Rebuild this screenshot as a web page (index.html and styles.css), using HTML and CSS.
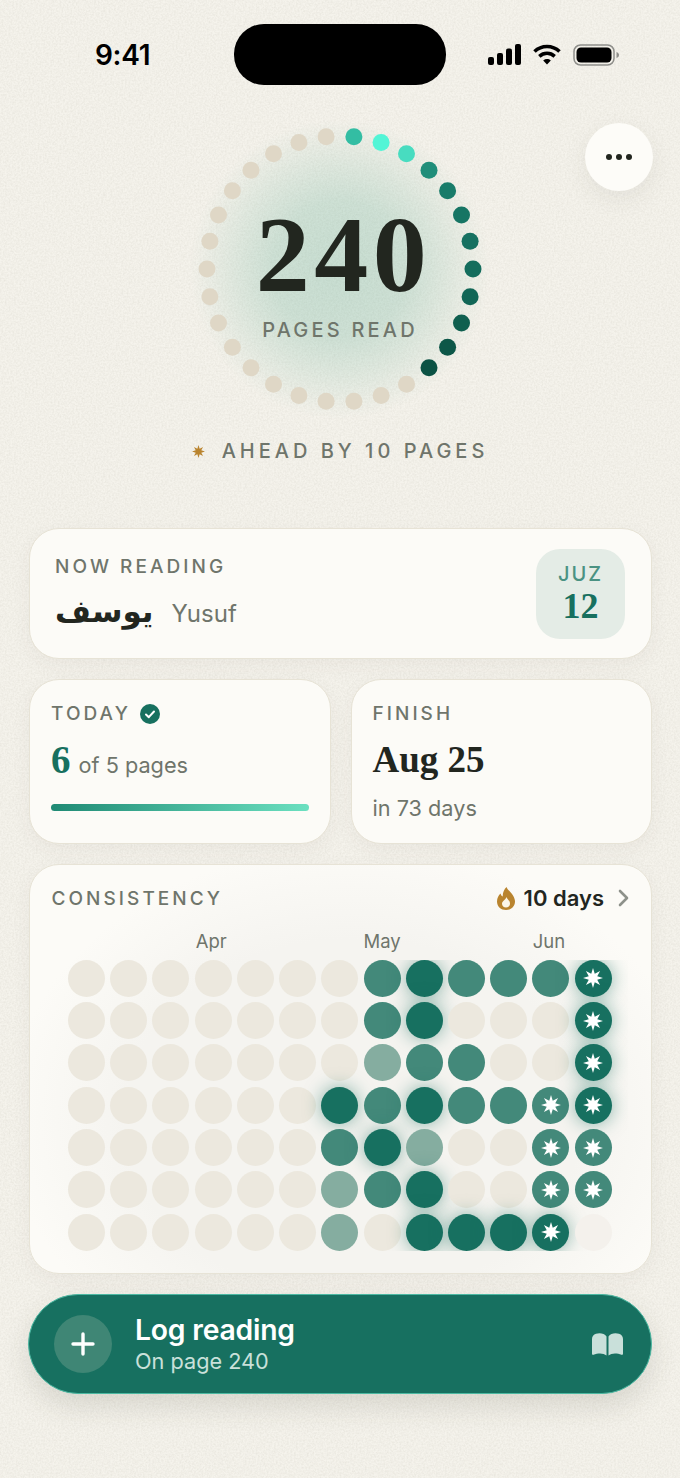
FILE: index.html
```html
<!DOCTYPE html>
<html lang="en">
<head>
    <meta charset="UTF-8">
    <meta name="viewport" content="width=device-width, initial-scale=1.0">
    <title>Reading Progress</title>
    <link rel="stylesheet" href="styles.css">
</head>
<body>
    <!-- Paper grain behind everything -->
    <svg class="grain" width="680" height="1478" aria-hidden="true">
        <filter id="paper">
            <feTurbulence type="fractalNoise" baseFrequency="0.55" numOctaves="3" seed="4"/>
            <feColorMatrix values="0 0 0 0 0.45  0 0 0 0 0.43  0 0 0 0 0.36  0 0 0 0.3 -0.09"/>
        </filter>
        <rect width="680" height="1478" filter="url(#paper)"/>
        <symbol id="burst" viewBox="0 0 20 20">
            <polygon points="10,0 11.76,5.75 17.07,2.93 14.25,8.24 20,10 14.25,11.76 17.07,17.07 11.76,14.25 10,20 8.24,14.25 2.93,17.07 5.75,11.76 0,10 5.75,8.24 2.93,2.93 8.24,5.75"/>
        </symbol>
    </svg>

    <div class="statusBar">
        <div class="time">9:41</div>
        <div class="island"></div>
        <div class="statusIcons">
            <svg width="33" height="21" viewBox="0 0 33 21" fill="#000">
                <rect x="0" y="13" width="6" height="8" rx="2"/>
                <rect x="9" y="9" width="6" height="12" rx="2"/>
                <rect x="18" y="4.500" width="6" height="16.500" rx="2"/>
                <rect x="27" y="0" width="6" height="21" rx="2"/>
            </svg>
            <svg width="28" height="21" viewBox="0 0 28 21" fill="none" stroke="#000" stroke-width="3.600">
                <path d="M1.500 7.500C8.500 .8 19.500 .8 26.500 7.500"/>
                <path d="M6.300 12.300C10.800 8.300 17.200 8.300 21.700 12.300"/>
                <path d="M10.200 16.500L14 20.500L17.800 16.500C15.500 14.600 12.500 14.600 10.200 16.500Z" fill="#000" stroke="none"/>
            </svg>
            <svg width="46" height="22" viewBox="0 0 46 22">
                <rect x="1" y="1" width="40" height="20" rx="6.500" fill="none" stroke="#8e8e8a" stroke-width="1.500"/>
                <rect x="3.500" y="3.500" width="35" height="15" rx="4.500" fill="#000"/>
                <path d="M43.500 8V14C45 13.500 46 12.500 46 11S45 8.500 43.500 8Z" fill="#8e8e8a"/>
            </svg>
        </div>
    </div>

    <button class="moreButton" aria-label="More"><span></span><span></span><span></span></button>

    <section class="hero">
        <div class="ring">
            <svg class="ringDots" width="300" height="300" viewBox="-150 -150 300 300">
                <g fill="#dfd7c6">
                    <circle cx="-13.9" cy="-132.3" r="8.500"/>
                    <circle cx="-41.1" cy="-126.5" r="8.500"/>
                    <circle cx="-66.5" cy="-115.2" r="8.500"/>
                    <circle cx="-89" cy="-98.8" r="8.500"/>
                    <circle cx="-107.6" cy="-78.2" r="8.500"/>
                    <circle cx="-121.5" cy="-54.1" r="8.500"/>
                    <circle cx="-130.1" cy="-27.7" r="8.500"/>
                    <circle cx="-133" cy="0" r="8.500"/>
                    <circle cx="-130.1" cy="27.7" r="8.500"/>
                    <circle cx="-121.5" cy="54.1" r="8.500"/>
                    <circle cx="-107.6" cy="78.2" r="8.500"/>
                    <circle cx="-89" cy="98.8" r="8.500"/>
                    <circle cx="-66.5" cy="115.2" r="8.500"/>
                    <circle cx="-41.1" cy="126.5" r="8.500"/>
                    <circle cx="-13.9" cy="132.3" r="8.500"/>
                    <circle cx="13.9" cy="132.3" r="8.500"/>
                    <circle cx="41.1" cy="126.5" r="8.500"/>
                    <circle cx="66.5" cy="115.2" r="8.500"/>
                </g>
                <circle cx="13.9" cy="-132.3" r="8.500" fill="#33bda3"/>
                <circle cx="41.1" cy="-126.5" r="8.500" fill="#52f5d6"/>
                <circle cx="66.5" cy="-115.2" r="8.500" fill="#48dcc0"/>
                <circle cx="89" cy="-98.8" r="8.500" fill="#208e7a"/>
                <circle cx="107.6" cy="-78.2" r="8.500" fill="#187c6a"/>
                <circle cx="121.5" cy="-54.1" r="8.500" fill="#167564"/>
                <circle cx="130.1" cy="-27.7" r="8.500" fill="#167161"/>
                <circle cx="133" cy="0" r="8.500" fill="#146d5d"/>
                <circle cx="130.1" cy="27.7" r="8.500" fill="#116656"/>
                <circle cx="121.5" cy="54.1" r="8.500" fill="#0f5f4f"/>
                <circle cx="107.6" cy="78.2" r="8.500" fill="#0d5748"/>
                <circle cx="89" cy="98.8" r="8.500" fill="#0b5244"/>
            </svg>
            <div class="ringText">
                <div class="pagesCount">240</div>
                <div class="pagesLabel">PAGES READ</div>
            </div>
        </div>
        <div class="ahead">
            <svg class="aheadStar" width="13" height="13"><use href="#burst"/></svg>
            <span>AHEAD BY 10 PAGES</span>
        </div>
    </section>

    <main class="cards">
        <div class="card nowReading">
            <div class="nowReadingText">
                <div class="label">NOW READING</div>
                <div class="surah">
                    <span class="surahArabic" lang="ar">يوسف</span>
                    <span class="surahName">Yusuf</span>
                </div>
            </div>
            <div class="juz">
                <div class="juzLabel">JUZ</div>
                <div class="juzNumber">12</div>
            </div>
        </div>

        <div class="cardRow">
            <div class="card smallCard">
                <div class="label labelRow">TODAY
                    <svg width="20" height="20" viewBox="0 0 20 20">
                        <circle cx="10" cy="10" r="10" fill="#17705f"/>
                        <path d="M6 10.500L8.800 13.200L14 7.500" fill="none" stroke="#fff" stroke-width="2" stroke-linecap="round" stroke-linejoin="round"/>
                    </svg>
                </div>
                <div class="todayValue"><span class="todayNumber">6</span> of 5 pages</div>
                <div class="progressBar"></div>
            </div>
            <div class="card smallCard">
                <div class="label">FINISH</div>
                <div class="finishDate">Aug 25</div>
                <div class="finishSub">in 73 days</div>
            </div>
        </div>

        <div class="card consistency">
            <div class="consistencyHead">
                <div class="label">CONSISTENCY</div>
                <div class="streak">
                    <svg width="18" height="23" viewBox="0 0 18 23">
                        <path d="M9.500 0C10.500 3 14 5 16 8.500C17.500 11 18 13 18 14.500C18 19.500 14 23 9 23C4 23 0 19.500 0 14.500C0 11 1.500 8.500 3.500 6.500C4 8 4.500 9 5.800 9.500C5.500 6 7 2.500 9.500 0Z" fill="#b9842f"/>
                        <path d="M9.500 10C10 12 13 13.500 13 16.500C13 19 11.200 20.500 9 20.500C6.800 20.500 5 19 5 16.800C5 14 8.500 13 9.500 10Z" fill="#fbf6ea"/>
                    </svg>
                    <span>10 days</span>
                    <svg class="chevron" width="11" height="18" viewBox="0 0 11 18">
                        <path d="M2 2L9 9L2 16" fill="none" stroke="#8d918a" stroke-width="2.600" stroke-linecap="round" stroke-linejoin="round"/>
                    </svg>
                </div>
            </div>

            <div class="months">
                <span class="monthApr">Apr</span>
                <span class="monthMay">May</span>
                <span class="monthJun">Jun</span>
            </div>

            <div class="heatClip">
                <div class="heatGrid">
                    <!-- row 1 -->
                    <i class="dot"></i><i class="dot"></i><i class="dot"></i><i class="dot"></i><i class="dot"></i><i class="dot"></i><i class="dot"></i>
                    <i class="dot mid"></i><i class="dot dark"></i><i class="dot mid"></i><i class="dot mid"></i><i class="dot mid"></i>
                    <i class="dot dark"><svg><use href="#burst"/></svg></i>
                    <!-- row 2 -->
                    <i class="dot"></i><i class="dot"></i><i class="dot"></i><i class="dot"></i><i class="dot"></i><i class="dot"></i><i class="dot"></i>
                    <i class="dot mid"></i><i class="dot dark"></i><i class="dot"></i><i class="dot"></i><i class="dot"></i>
                    <i class="dot dark"><svg><use href="#burst"/></svg></i>
                    <!-- row 3 -->
                    <i class="dot"></i><i class="dot"></i><i class="dot"></i><i class="dot"></i><i class="dot"></i><i class="dot"></i><i class="dot"></i>
                    <i class="dot light"></i><i class="dot mid"></i><i class="dot mid"></i><i class="dot"></i><i class="dot"></i>
                    <i class="dot dark"><svg><use href="#burst"/></svg></i>
                    <!-- row 4 -->
                    <i class="dot"></i><i class="dot"></i><i class="dot"></i><i class="dot"></i><i class="dot"></i><i class="dot"></i>
                    <i class="dot dark"></i><i class="dot mid"></i><i class="dot dark"></i><i class="dot mid"></i><i class="dot mid"></i>
                    <i class="dot mid"><svg><use href="#burst"/></svg></i>
                    <i class="dot dark"><svg><use href="#burst"/></svg></i>
                    <!-- row 5 -->
                    <i class="dot"></i><i class="dot"></i><i class="dot"></i><i class="dot"></i><i class="dot"></i><i class="dot"></i>
                    <i class="dot mid"></i><i class="dot dark"></i><i class="dot light"></i><i class="dot"></i><i class="dot"></i>
                    <i class="dot mid"><svg><use href="#burst"/></svg></i>
                    <i class="dot mid"><svg><use href="#burst"/></svg></i>
                    <!-- row 6 -->
                    <i class="dot"></i><i class="dot"></i><i class="dot"></i><i class="dot"></i><i class="dot"></i><i class="dot"></i>
                    <i class="dot light"></i><i class="dot mid"></i><i class="dot dark"></i><i class="dot"></i><i class="dot"></i>
                    <i class="dot mid"><svg><use href="#burst"/></svg></i>
                    <i class="dot mid"><svg><use href="#burst"/></svg></i>
                    <!-- row 7 -->
                    <i class="dot"></i><i class="dot"></i><i class="dot"></i><i class="dot"></i><i class="dot"></i><i class="dot"></i>
                    <i class="dot light"></i><i class="dot"></i><i class="dot dark"></i><i class="dot dark"></i><i class="dot dark"></i>
                    <i class="dot dark"><svg><use href="#burst"/></svg></i>
                    <i class="dot future"></i>
                </div>
            </div>
        </div>

        <button class="logButton">
            <span class="plusCircle">
                <svg width="24" height="24" viewBox="0 0 24 24">
                    <path d="M12 2V22M2 12H22" stroke="#fff" stroke-width="3.400" stroke-linecap="round"/>
                </svg>
            </span>
            <span class="logText">
                <span class="logTitle">Log reading</span>
                <span class="logSub">On page 240</span>
            </span>
            <svg class="bookIcon" width="31" height="23" viewBox="0 0 31 23" fill="#c9e0da">
                <path d="M14.500 3.500V22.500C11.500 19.800 6 19.800 1.500 21.800C.7 22.100 0 21.600 0 20.800V6C0 3.500 1.500 1.500 4 .8C8 -.4 12.500 .5 14.500 3.500Z"/>
                <path d="M16.500 3.500V22.500C19.500 19.800 25 19.800 29.500 21.800C30.300 22.100 31 21.600 31 20.800V6C31 3.500 29.500 1.500 27 .8C23 -.4 18.500 .5 16.500 3.500Z"/>
            </svg>
        </button>
    </main>
</body>
</html>
```

FILE: styles.css
```css
body {
    background-color: #f5f3ec;
    color: #22261f;
    font-family: Inter, "Noto Sans", sans-serif;
    margin: 0;
    padding: 0;
    width: 680px;
    height: 1478px;
    overflow: hidden;
    position: relative;
}

.grain {
    position: absolute;
    top: 0;
    left: 0;
}

/* Status bar */

.statusBar {
    position: relative;
    display: grid;
    grid-template-columns: 234px 212px 1fr;
    align-items: center;
    padding-top: 24px;
    height: 61px;
}

.time {
    padding-left: 95px;
    font-size: 28px;
    font-weight: 600;
    letter-spacing: -0.3px;
    color: #000;
}

.island {
    height: 61px;
    background-color: #000;
    border-radius: 30px;
}

.statusIcons {
    display: flex;
    align-items: center;
    gap: 12px;
    padding-left: 42px;
}

.moreButton {
    position: absolute;
    top: 123px;
    left: 585px;
    width: 68px;
    height: 68px;
    display: flex;
    align-items: center;
    justify-content: center;
    gap: 4px;
    padding: 0;
    border: none;
    border-radius: 50%;
    background-color: #fdfcf8;
    box-shadow: 0px 8px 24px rgba(70, 65, 50, 0.08);
}

.moreButton span {
    width: 6px;
    height: 6px;
    border-radius: 50%;
    background-color: #22261f;
}

/* Hero ring */

.hero {
    position: relative;
    display: flex;
    flex-direction: column;
    align-items: center;
    height: 443px;
}

.ring {
    display: grid;
    width: 300px;
    height: 300px;
    margin-top: 34px;
    background: radial-gradient(closest-side, rgba(90, 170, 145, 0.29) 0%, rgba(90, 170, 145, 0.25) 45%, rgba(90, 170, 145, 0.13) 72%, rgba(90, 170, 145, 0) 100%);
}

.ringDots,
.ringText {
    grid-area: 1 / 1;
}

.ringText {
    display: flex;
    flex-direction: column;
    align-items: center;
}

.pagesCount {
    margin-top: 82px;
    margin-left: 7px;
    font-family: "Liberation Serif", serif;
    font-size: 108px;
    line-height: 108px;
    font-weight: 700;
    letter-spacing: 4.500px;
    color: #22261f;
}

.pagesLabel {
    margin-top: 9px;
    font-size: 20px;
    font-weight: 500;
    letter-spacing: 3.200px;
    color: #6f756b;
}

.ahead {
    display: flex;
    align-items: center;
    gap: 17px;
    margin-top: 20px;
    font-size: 20px;
    font-weight: 500;
    letter-spacing: 4px;
    color: #6f756b;
}

.aheadStar {
    fill: #b9842f;
}

/* Cards */

.cards {
    position: relative;
    display: flex;
    flex-direction: column;
    gap: 20px;
    padding: 0 28px 0 29px;
}

.card {
    box-sizing: border-box;
    background-color: #fcfbf7;
    border: 1.500px solid #e7e3d6;
    border-radius: 30px;
    box-shadow: 0px 6px 20px rgba(70, 65, 50, 0.05);
}

.label {
    font-size: 19px;
    font-weight: 500;
    letter-spacing: 3.050px;
    color: #6f756b;
}

.labelRow {
    display: flex;
    align-items: center;
    gap: 9px;
}

.nowReading {
    display: flex;
    justify-content: space-between;
    align-items: center;
    height: 131px;
    padding: 0 25px 0 25px;
}

.nowReadingText {
    margin-bottom: 4px;
}

.surah {
    display: flex;
    align-items: center;
    gap: 18px;
    margin-top: 16px;
}

.surahArabic {
    font-family: "DejaVu Sans", sans-serif;
    font-size: 31px;
    line-height: 34px;
    font-weight: 700;
    color: #22261f;
}

.surahName {
    margin-top: 4px;
    font-size: 24px;
    color: #6f756b;
}

.juz {
    display: flex;
    flex-direction: column;
    align-items: center;
    justify-content: center;
    width: 89px;
    height: 90px;
    margin-right: 1px;
    background-color: #e4ece6;
    border-radius: 24px;
}

.juzLabel {
    font-size: 20px;
    font-weight: 500;
    letter-spacing: 2px;
    color: #4a9282;
}

.juzNumber {
    font-family: "Liberation Serif", serif;
    font-size: 36px;
    line-height: 40px;
    font-weight: 700;
    color: #17705f;
}

.cardRow {
    display: grid;
    grid-template-columns: 1fr 1fr;
    gap: 20px;
}

.smallCard {
    height: 165px;
    padding: 22px 21px 0 21px;
}

.todayValue {
    display: flex;
    align-items: baseline;
    gap: 8px;
    margin-top: 13px;
    font-size: 21.700px;
    color: #6f756b;
}

.todayNumber {
    font-family: "Liberation Serif", serif;
    font-size: 39px;
    line-height: 44px;
    font-weight: 700;
    color: #17705f;
}

.progressBar {
    height: 7px;
    margin-top: 22px;
    border-radius: 4px;
    background: linear-gradient(to right, #1f8a74 0%, #6be0c0 100%);
}

.finishDate {
    margin-top: 13px;
    font-family: "Liberation Serif", serif;
    font-size: 37px;
    line-height: 44px;
    font-weight: 700;
    color: #22261f;
}

.finishSub {
    margin-top: 13px;
    font-size: 21.700px;
    color: #6f756b;
}

.consistency {
    height: 410px;
    padding: 20px 22px 0 21.500px;
    background: radial-gradient(ellipse at 52% 62%, #f5f4f0 0%, #f5f4f0 50%, #fcfbf7 76%);
}

.consistencyHead {
    display: flex;
    justify-content: space-between;
    align-items: center;
}

.streak {
    display: flex;
    align-items: center;
    gap: 9px;
    font-size: 22px;
    font-weight: 600;
    color: #22261f;
}

.chevron {
    margin-left: 5px;
}

.months,
.heatGrid {
    display: grid;
    grid-template-columns: repeat(13, 37px);
    column-gap: 5.220px;
}

.months {
    height: 24px;
    margin-top: 18px;
    padding-left: 16.500px;
    font-size: 18.500px;
    line-height: 24px;
    color: #6f756b;
}

.months span {
    justify-self: center;
    white-space: nowrap;
}

.monthApr {
    grid-column: 4;
    margin-right: 4px;
}

.monthMay {
    grid-column: 8;
}

.monthJun {
    grid-column: 12;
    margin-right: 4px;
}

.heatClip {
    width: 560px;
    margin-top: 6.700px;
    padding-left: 16.500px;
    overflow: hidden;
}

.heatGrid {
    row-gap: 5.350px;
}

.dot {
    display: flex;
    align-items: center;
    justify-content: center;
    width: 37px;
    height: 37px;
    border-radius: 50%;
    background-color: #ece8de;
}

.dot svg {
    width: 20px;
    height: 20px;
    fill: #fff;
}

.dot.light {
    background-color: #85ada0;
}

.dot.mid {
    background-color: #43897a;
}

.dot.dark {
    background-color: #177060;
    box-shadow: 0 0 18px rgba(23, 112, 96, 0.5);
}

.dot.future {
    background-color: #f4f1ec;
}

/* Log reading button */

.logButton {
    box-sizing: border-box;
    display: flex;
    align-items: center;
    width: 624px;
    height: 100px;
    margin-left: -1px;
    padding: 0 28px 0 25px;
    background-color: #177060;
    border: 1.500px solid #4cb8a2;
    border-radius: 50px;
    box-shadow: 0px 12px 28px rgba(60, 60, 45, 0.14);
    font-family: inherit;
    text-align: left;
}

.plusCircle {
    display: flex;
    align-items: center;
    justify-content: center;
    width: 58px;
    height: 58px;
    border-radius: 50%;
    background-color: #3f8675;
}

.logText {
    display: flex;
    flex-direction: column;
    flex: 1;
    margin-left: 23px;
}

.logTitle {
    font-size: 28.300px;
    line-height: 34px;
    font-weight: 600;
    letter-spacing: -0.2px;
    color: #ffffff;
}

.logSub {
    font-size: 21.700px;
    line-height: 28px;
    color: #c9e0da;
}
```
